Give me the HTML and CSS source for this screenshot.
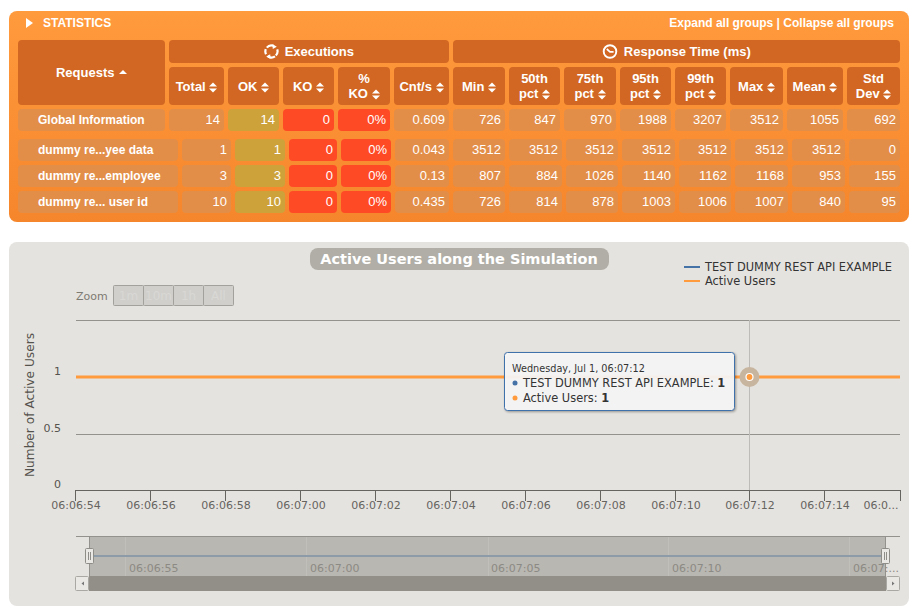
FILE: index.html
```html
<!DOCTYPE html>
<html lang="en">
<head>
    <meta charset="UTF-8">
    <meta name="viewport" content="width=device-width, initial-scale=1.0">
    <title>Gatling Stats - Global Information</title>
    <link rel="stylesheet" href="styles.css">
</head>
<body>
    <svg class="defs" width="0" height="0">
        <symbol id="sort" viewBox="0 0 9 11">
            <path d="M4.5 0 9 4.4H0ZM0 6.6H9L4.5 11Z" fill="#fff"/>
        </symbol>
    </svg>

    <section class="stats">
        <div class="stats-title">
            <span class="arrow-right"></span>
            <span class="stats-name">STATISTICS</span>
            <span class="stats-links">Expand all groups | Collapse all groups</span>
        </div>

        <div class="grid grid-head th-row">
            <div class="th th-requests"><span>Requests <span class="sort-up"></span></span></div>
            <div class="th th-group th-exec">
                <span>
                <svg class="icon" width="15" height="15" viewBox="0 0 15 15">
                    <path d="M2.800 3.600A6 6 0 0 1 9.400 1.800M13.200 5.400A6 6 0 0 1 11.800 11.600M11 12.400A6 6 0 0 1 3.800 12.200M2 10.200A6 6 0 0 1 1.800 5.200" fill="none" stroke="#fff" stroke-width="2.200"/>
                    <path d="M8.400 0 12.800 2.800 8.800 5ZM6.600 15 2.200 12.400 6.200 10.200Z" fill="#fff"/>
                </svg>
                Executions
                </span>
            </div>
            <div class="th th-group th-resp">
                <span>
                <svg class="icon" width="16" height="15" viewBox="0 0 16 15">
                    <circle cx="8" cy="7.500" r="6.300" fill="none" stroke="#fff" stroke-width="1.900"/>
                    <path d="M4.800 5 8 7.800H11.600" fill="none" stroke="#fff" stroke-width="1.700"/>
                </svg>
                Response Time (ms)
                </span>
            </div>
            <div class="th"><span>Total <svg class="sort"><use href="#sort"/></svg></span></div>
            <div class="th"><span>OK <svg class="sort"><use href="#sort"/></svg></span></div>
            <div class="th"><span>KO <svg class="sort"><use href="#sort"/></svg></span></div>
            <div class="th"><span>%<br>KO <svg class="sort"><use href="#sort"/></svg></span></div>
            <div class="th"><span>Cnt/s <svg class="sort"><use href="#sort"/></svg></span></div>
            <div class="th"><span>Min <svg class="sort"><use href="#sort"/></svg></span></div>
            <div class="th"><span>50th<br>pct <svg class="sort"><use href="#sort"/></svg></span></div>
            <div class="th"><span>75th<br>pct <svg class="sort"><use href="#sort"/></svg></span></div>
            <div class="th"><span>95th<br>pct <svg class="sort"><use href="#sort"/></svg></span></div>
            <div class="th"><span>99th<br>pct <svg class="sort"><use href="#sort"/></svg></span></div>
            <div class="th"><span>Max <svg class="sort"><use href="#sort"/></svg></span></div>
            <div class="th"><span>Mean <svg class="sort"><use href="#sort"/></svg></span></div>
            <div class="th"><span>Std<br>Dev <svg class="sort"><use href="#sort"/></svg></span></div>
        </div>

        <div class="grid grid-head row-global">
            <div class="td name">Global Information</div>
            <div class="td">14</div><div class="td ok">14</div><div class="td ko">0</div><div class="td ko">0%</div><div class="td">0.609</div>
            <div class="td">726</div><div class="td">847</div><div class="td">970</div><div class="td">1988</div><div class="td">3207</div><div class="td">3512</div><div class="td">1055</div><div class="td">692</div>
        </div>

        <div class="grid grid-body">
            <div class="td name">dummy re...yee data</div>
            <div class="td">1</div><div class="td ok">1</div><div class="td ko">0</div><div class="td ko">0%</div><div class="td">0.043</div>
            <div class="td">3512</div><div class="td">3512</div><div class="td">3512</div><div class="td">3512</div><div class="td">3512</div><div class="td">3512</div><div class="td">3512</div><div class="td">0</div>

            <div class="td name">dummy re...employee</div>
            <div class="td">3</div><div class="td ok">3</div><div class="td ko">0</div><div class="td ko">0%</div><div class="td">0.13</div>
            <div class="td">807</div><div class="td">884</div><div class="td">1026</div><div class="td">1140</div><div class="td">1162</div><div class="td">1168</div><div class="td">953</div><div class="td">155</div>

            <div class="td name">dummy re... user id</div>
            <div class="td">10</div><div class="td ok">10</div><div class="td ko">0</div><div class="td ko">0%</div><div class="td">0.435</div>
            <div class="td">726</div><div class="td">814</div><div class="td">878</div><div class="td">1003</div><div class="td">1006</div><div class="td">1007</div><div class="td">840</div><div class="td">95</div>
        </div>
    </section>

    <section class="chart-panel">
        <svg class="chart" width="900" height="364" viewBox="9 242 900 364">
            <rect class="title-pill" x="310" y="248" width="299" height="22" rx="8"/>
            <text class="title" x="459" y="264">Active Users along the Simulation</text>

            <path d="M684 267H700" stroke="#4572a7" stroke-width="2"/>
            <path d="M684 281H700" stroke="#ff9a3d" stroke-width="2"/>
            <text class="legend" x="705" y="271">TEST DUMMY REST API EXAMPLE</text>
            <text class="legend" x="705" y="285">Active Users</text>

            <text class="zoom-label" x="76" y="300">Zoom</text>
            <g class="zoom-btn">
                <rect x="113.500" y="285.500" width="30" height="20" rx="1"/>
                <rect x="143.500" y="285.500" width="30" height="20" rx="1"/>
                <rect x="173.500" y="285.500" width="30" height="20" rx="1"/>
                <rect x="203.500" y="285.500" width="30" height="20" rx="1"/>
            </g>
            <g class="zoom-text">
                <text x="128.500" y="300">1m</text>
                <text x="158.500" y="300">10m</text>
                <text x="188.500" y="300">1h</text>
                <text x="218.500" y="300">All</text>
            </g>

            <path class="grid-line" d="M76 320.500H900M76 434.500H900"/>
            <path class="crosshair" d="M749.500 320V490"/>
            <path class="axis" d="M76 490.500H900M75.500 490V501M150.500 490V501M225.500 490V501M300.500 490V501M375.500 490V501M450.500 490V501M525.500 490V501M600.500 490V501M675.500 490V501M749.500 490V501M824.500 490V501M900.500 490V501"/>

            <path d="M76 377H900" stroke="#ff9a3d" stroke-width="3"/>

            <g class="y-label">
                <text x="61" y="375">1</text>
                <text x="61" y="432">0.5</text>
                <text x="61" y="488">0</text>
            </g>
            <text class="y-title" transform="translate(34 405) rotate(-90)">Number of Active Users</text>

            <g class="x-label">
                <text x="76" y="509">06:06:54</text>
                <text x="151" y="509">06:06:56</text>
                <text x="226" y="509">06:06:58</text>
                <text x="301" y="509">06:07:00</text>
                <text x="376" y="509">06:07:02</text>
                <text x="451" y="509">06:07:04</text>
                <text x="526" y="509">06:07:06</text>
                <text x="601" y="509">06:07:08</text>
                <text x="676" y="509">06:07:10</text>
                <text x="750" y="509">06:07:12</text>
                <text x="825" y="509">06:07:14</text>
                <text x="881" y="509">06:0...</text>
            </g>

            <!-- navigator -->
            <path class="nav-edge" d="M76 536.500H900"/>
            <rect class="nav-mask" x="89" y="537" width="796" height="39"/>
            <path class="nav-sep" d="M125.500 537V576M306.500 537V576M488.500 537V576M668.500 537V576M849.500 537V576"/>
            <path class="nav-edge" d="M89.500 536V576M885.500 536V576"/>
            <path d="M89 556H885" stroke="#8d9aa8" stroke-width="2"/>
            <g class="nav-label">
                <text x="129" y="572">06:06:55</text>
                <text x="310" y="572">06:07:00</text>
                <text x="491" y="572">06:07:05</text>
                <text x="672" y="572">06:07:10</text>
                <text x="853" y="572">06:07:...</text>
            </g>
            <rect x="89" y="576" width="797" height="15" fill="#918f88"/>
            <g class="scroll-btn">
                <rect x="75.500" y="576.500" width="13" height="14" rx="1"/>
                <rect x="886.500" y="576.500" width="13" height="14" rx="1"/>
            </g>
            <path d="M84 581.500V585.500L81.500 583.500ZM892 581.500V585.500L894.500 583.500Z" fill="#777"/>
            <g class="nav-handle">
                <rect x="85.500" y="548.500" width="8" height="15" rx="1"/>
                <rect x="881.500" y="548.500" width="8" height="15" rx="1"/>
                <path d="M88.500 552V560M90.500 552V560M884.500 552V560M886.500 552V560"/>
            </g>

            <!-- hover marker and tooltip -->
            <circle cx="749.500" cy="377" r="10" fill="#c8b59f"/>
            <circle cx="749.500" cy="377" r="3.500" fill="#ff9a3d" stroke="#fff" stroke-width="1.200"/>
            <rect class="tip-box" x="504.500" y="352.500" width="230" height="58" rx="3"/>
            <text class="tip-date" x="512" y="372">Wednesday, Jul 1, 06:07:12</text>
            <circle cx="515" cy="383" r="2.500" fill="#4572a7"/>
            <text class="tip-line" x="523" y="387">TEST DUMMY REST API EXAMPLE: <tspan class="tip-val">1</tspan></text>
            <circle cx="515" cy="398" r="2.500" fill="#ff9a3d"/>
            <text class="tip-line" x="523" y="402">Active Users: <tspan class="tip-val">1</tspan></text>
        </svg>
    </section>
</body>
</html>
```

FILE: styles.css
```css
* {
    margin: 0;
    padding: 0;
    box-sizing: border-box;
}

body {
    width: 922px;
    padding: 11px 13px 0 9px;
    background-color: #fff;
    font-family: "Liberation Sans", Arial, sans-serif;
    font-size: 12px;
    color: #fff;
}

.defs {
    position: absolute;
}

/* Statistics table */
.stats {
    height: 211px;
    padding: 0 9px;
    border-radius: 8px;
    background: linear-gradient(#ff9a3d, #f6862b);
}

.stats-title {
    display: flex;
    align-items: center;
    height: 29px;
    padding: 0 6px 5px 8px;
    font-weight: bold;
}

.arrow-right {
    width: 0;
    height: 0;
    margin-right: 10px;
    border-left: 7px solid #fff;
    border-top: 5px solid transparent;
    border-bottom: 5px solid transparent;
}

.stats-links {
    margin-left: auto;
}

.grid {
    display: grid;
    gap: 4px;
}

.grid-head {
    grid-template-columns: 147px 55px 51px 51px 52px 55px 52px 51px 52px 51px 51px 53px 56px 53px;
}

.th-row {
    grid-template-rows: 23px 38px;
}

.grid-body {
    grid-template-columns: 160px 49px 50px 48px 50px 54px 52px 53px 52px 53px 52px 53px 53px 51px;
    grid-auto-rows: 22px;
    margin-top: 8px;
}

.row-global {
    grid-auto-rows: 22px;
    margin-top: 4px;
}

.th {
    display: flex;
    align-items: center;
    justify-content: center;
    border-radius: 4px;
    background-color: #d16722;
    font-size: 13px;
    font-weight: bold;
    line-height: 15px;
    text-align: center;
}

.th-requests {
    grid-row: 1 / span 2;
}

.th-exec {
    grid-column: 2 / span 5;
}

.th-resp {
    grid-column: 7 / span 8;
}

.icon {
    margin-right: 2px;
    vertical-align: -3px;
}

.sort {
    width: 8px;
    height: 11px;
    vertical-align: -2px;
}

.sort-up {
    display: inline-block;
    width: 0;
    height: 0;
    margin-left: 1px;
    border-left: 4px solid transparent;
    border-right: 4px solid transparent;
    border-bottom: 4px solid #fff;
    vertical-align: 3px;
}

.td {
    height: 22px;
    padding-right: 4px;
    border-radius: 4px;
    background-color: #e38e48;
    line-height: 21px;
    font-size: 13px;
    text-align: right;
}

.name {
    padding-left: 20px;
    font-size: 12px;
    font-weight: bold;
    line-height: 23px;
    text-align: left;
}

.ok {
    background-color: #cda23a;
}

.ko {
    background-color: #ff4a26;
}

/* Chart */
.chart-panel {
    width: 900px;
    height: 364px;
    margin-top: 20px;
    border-radius: 8px;
    background-color: #e5e3df;
    overflow: hidden;
}

.chart {
    display: block;
    font-family: "DejaVu Sans", Verdana, sans-serif;
}

.title-pill {
    fill: #b0aea6;
}

.title {
    fill: #fff;
    font-size: 14.500px;
    font-weight: bold;
    text-anchor: middle;
}

.legend {
    fill: #333;
    font-size: 11.400px;
}

.zoom-label {
    fill: #7d7a72;
    font-size: 11px;
}

.zoom-btn rect {
    fill: #d0cfcc;
    stroke: #a3a19b;
}

.zoom-text text {
    fill: #d9d8d5;
    font-size: 12px;
    text-anchor: middle;
}

.grid-line {
    fill: none;
    stroke: #94928c;
}

.crosshair {
    stroke: #bdbcb8;
}

.axis {
    fill: none;
    stroke: #66645f;
}

.y-label text {
    fill: #55534e;
    font-size: 11px;
    text-anchor: end;
}

.y-title {
    fill: #55534e;
    font-size: 12.200px;
    text-anchor: middle;
}

.x-label text {
    fill: #66645f;
    font-size: 11px;
    text-anchor: middle;
}

.nav-mask {
    fill: #b9b7b1;
}

.nav-edge {
    fill: none;
    stroke: #94928c;
}

.nav-sep {
    stroke: #c0bfb9;
}

.nav-label text {
    fill: #8c8a84;
    font-size: 11px;
}

.scroll-btn rect {
    fill: #e9e8e5;
    stroke: #aaa8a2;
}

.nav-handle rect {
    fill: #e9e8e5;
    stroke: #8f8d87;
}

.nav-handle path {
    fill: none;
    stroke: #8f8d87;
}

.tip-box {
    fill: rgba(250, 250, 250, .93);
    stroke: #3f71ab;
    filter: drop-shadow(1px 1px 1px rgba(0, 0, 0, .35));
}

.tip-date {
    fill: #333;
    font-size: 9.700px;
}

.tip-line {
    fill: #333;
    font-size: 11.400px;
}

.tip-val {
    font-weight: bold;
}
```
